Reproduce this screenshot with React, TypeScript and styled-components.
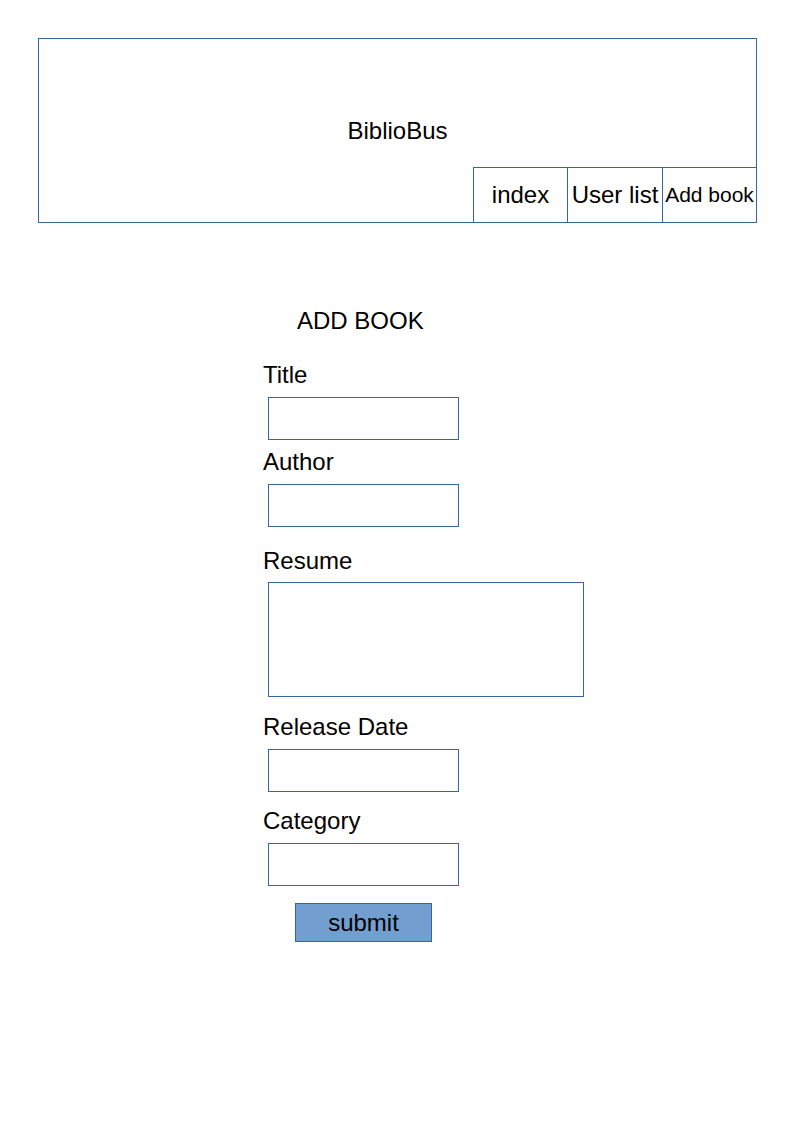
import React, { useState } from "react";
import styled, { createGlobalStyle } from "styled-components";

const GlobalStyle = createGlobalStyle`
  body {
    margin: 0;
    background: #ffffff;
    font-family: "Liberation Sans", Arial, sans-serif;
    color: #000000;
  }
`;

const Header = styled.header`
  margin: 38px 37px 0 38px;
  height: 185px;
  box-sizing: border-box;
  border: 1px solid #3465a4;
  display: grid;
  grid-template: 1fr / 1fr;
`;

const Brand = styled.div`
  grid-area: 1 / 1;
  align-self: center;
  justify-self: center;
  font-size: 24px;
  line-height: 28px;
`;

const Nav = styled.nav`
  grid-area: 1 / 1;
  align-self: end;
  justify-self: end;
  display: flex;
`;

const Tab = styled.a<{ $width: number; $size: number }>`
  width: ${(p) => p.$width}px;
  height: 55px;
  box-sizing: border-box;
  border-left: 1px solid #3465a4;
  border-top: 1px solid #3465a4;
  display: flex;
  align-items: center;
  justify-content: center;
  font-size: ${(p) => p.$size}px;
  white-space: nowrap;
  color: #000000;
  text-decoration: none;
  cursor: pointer;
`;

const Form = styled.form`
  padding-left: 263px;
  display: flex;
  flex-direction: column;
  align-items: flex-start;
`;

const Heading = styled.h1`
  margin: 84px 0 0 34px;
  font-size: 24px;
  line-height: 28px;
  font-weight: normal;
`;

const Field = styled.div<{ $top: number }>`
  margin-top: ${(p) => p.$top}px;
  display: flex;
  flex-direction: column;
  align-items: flex-start;
`;

const Label = styled.label`
  font-size: 24px;
  line-height: 28px;
`;

const Input = styled.input`
  display: block;
  margin: 8px 0 0 5px;
  width: 191px;
  height: 43px;
  box-sizing: border-box;
  border: 1px solid #3465a4;
  border-radius: 0;
  padding: 0 6px;
  font-family: inherit;
  font-size: 16px;
  outline: none;
`;

const TextArea = styled.textarea`
  display: block;
  margin: 7px 0 0 5px;
  width: 316px;
  height: 115px;
  box-sizing: border-box;
  border: 1px solid #3465a4;
  border-radius: 0;
  padding: 6px;
  font-family: inherit;
  font-size: 16px;
  resize: none;
  outline: none;
`;

const Submit = styled.button`
  margin: 17px 0 0 32px;
  width: 137px;
  height: 39px;
  box-sizing: border-box;
  background: #729fcf;
  border: 1px solid #3465a4;
  border-radius: 0;
  padding: 0;
  font-family: "Liberation Sans", Arial, sans-serif;
  font-size: 24px;
  color: #000000;
  cursor: pointer;
`;

const fields = [
  { name: "title", label: "Title", top: 26 },
  { name: "author", label: "Author", top: 8 },
];

const lowerFields = [
  { name: "release", label: "Release Date", top: 16 },
  { name: "category", label: "Category", top: 15 },
];

function App() {
  const [values, setValues] = useState<Record<string, string>>({});

  const update = (name: string) => (e: any) => {
    setValues({ ...values, [name]: e.target.value });
  };

  return (
    <>
      <GlobalStyle />
      <Header>
        <Brand>BiblioBus</Brand>
        <Nav>
          <Tab $width={94} $size={24}>index</Tab>
          <Tab $width={95} $size={24}>User list</Tab>
          <Tab $width={94} $size={21}>Add book</Tab>
        </Nav>
      </Header>
      <Form onSubmit={(e) => e.preventDefault()}>
        <Heading>ADD BOOK</Heading>
        {fields.map((f) => (
          <Field key={f.name} $top={f.top}>
            <Label htmlFor={f.name}>{f.label}</Label>
            <Input id={f.name} value={values[f.name] || ""} onChange={update(f.name)} />
          </Field>
        ))}
        <Field $top={20}>
          <Label htmlFor="resume">Resume</Label>
          <TextArea id="resume" value={values.resume || ""} onChange={update("resume")} />
        </Field>
        {lowerFields.map((f) => (
          <Field key={f.name} $top={f.top}>
            <Label htmlFor={f.name}>{f.label}</Label>
            <Input id={f.name} value={values[f.name] || ""} onChange={update(f.name)} />
          </Field>
        ))}
        <Submit type="submit">submit</Submit>
      </Form>
    </>
  );
}

export default App;
